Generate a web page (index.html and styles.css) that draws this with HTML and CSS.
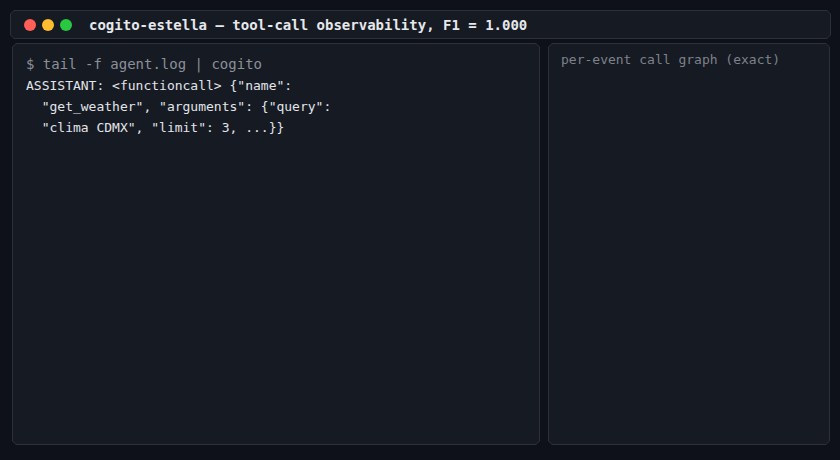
FILE: index.html
```html
<!DOCTYPE html>
<html>
<head>
<meta charset="utf-8">
<link rel="stylesheet" href="styles.css">
</head>
<body>
<div class="app">
  <div class="frame titlebar">
    <div class="inner titlebar-inner">
      <span class="dot red"></span>
      <span class="dot yellow"></span>
      <span class="dot green"></span>
      <span class="title">cogito-estella — tool-call observability, F1 = 1.000</span>
    </div>
  </div>
  <div class="panes">
    <div class="frame pane pane-left">
      <div class="inner pane-inner left-inner">
        <div class="cmd">$ tail -f agent.log | cogito</div>
        <div class="log">ASSISTANT: &lt;functioncall&gt; {"name":
  "get_weather", "arguments": {"query":
  "clima CDMX", "limit": 3, ...}}</div>
      </div>
    </div>
    <div class="frame pane pane-right">
      <div class="inner pane-inner right-inner">
        <div class="caption">per-event call graph (exact)</div>
      </div>
    </div>
  </div>
</div>
</body>
</html>
```
FILE: styles.css
```css
* { box-sizing: border-box; }
html, body {
  margin: 0;
  padding: 0;
  background: #0e1119;
  width: 840px;
  height: 460px;
  overflow: hidden;
  font-family: "DejaVu Sans Mono", "Liberation Mono", monospace;
}
.app {
  padding: 10px 9px 0 10px;
  display: flex;
  flex-direction: column;
  gap: 4px;
}
.frame {
  background: #2b3039;
  padding: 1px;
  clip-path: polygon(4px 0, calc(100% - 4px) 0, 100% 4px, 100% calc(100% - 4px), calc(100% - 4px) 100%, 4px 100%, 0 calc(100% - 4px), 0 4px);
}
.inner {
  background: #161a22;
  height: 100%;
  clip-path: polygon(3px 0, calc(100% - 3px) 0, 100% 3px, 100% calc(100% - 3px), calc(100% - 3px) 100%, 3px 100%, 0 calc(100% - 3px), 0 3px);
}
.titlebar {
  height: 29px;
}
.titlebar-inner {
  display: flex;
  align-items: center;
  padding-left: 13px;
  gap: 6px;
}
.dot {
  width: 12px;
  height: 12px;
  border-radius: 50%;
  flex: none;
}
.red { background: #ff5f57; }
.yellow { background: #febc2e; }
.green { background: #28c840; }
.title {
  margin-left: 11px;
  color: #e6e8ec;
  font-weight: bold;
  font-size: 14px;
}
.panes {
  display: flex;
  gap: 8px;
  padding: 0 1px 0 2px;
  height: 402px;
}
.pane-left { width: 528px; flex: none; }
.pane-right { flex: 1; }
.left-inner {
  padding: 10px 13px;
}
.cmd {
  color: #8b9099;
  font-size: 14px;
  line-height: 21px;
}
.log {
  color: #e2e5ea;
  white-space: pre;
  font-size: 13px;
  line-height: 21px;
}
.right-inner {
  padding: 7px 12px;
}
.caption {
  color: #7d828b;
  font-size: 13px;
  line-height: 18px;
}
```
